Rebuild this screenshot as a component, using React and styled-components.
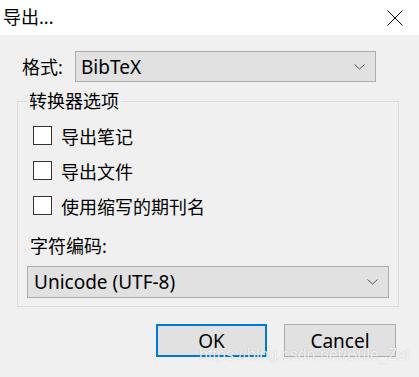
import React from "react";
import styled, { createGlobalStyle } from "styled-components";

const GlobalStyle = createGlobalStyle`
  html, body {
    margin: 0;
    padding: 0;
    background: #f0f0f0;
  }
  body {
    font-family: "Noto Sans", "Noto Sans CJK SC", sans-serif;
    color: #000;
  }
`;

const Dialog = styled.div`
  position: relative;
  width: 419px;
  height: 377px;
  background: #f0f0f0;
  overflow: hidden;
`;

const TitleBar = styled.div`
  height: 35px;
  background: #ffffff;
  display: flex;
  align-items: center;
  justify-content: space-between;
  padding: 0 16px 0 3px;
  box-sizing: border-box;
`;

const Title = styled.div`
  font-size: 18px;
  line-height: 18px;
  margin-top: -1px;
`;

const Body = styled.div`
  display: flex;
  flex-direction: column;
  padding: 16px 20px 0 17px;
`;

const FormatRow = styled.div`
  display: flex;
  align-items: center;
  height: 31px;
  padding-left: 5px;
`;

const Label = styled.div`
  font-size: 18px;
  line-height: 20px;
  width: 53px;
`;

const Select = styled.div`
  box-sizing: border-box;
  display: flex;
  align-items: center;
  justify-content: space-between;
  width: ${(p) => p.$width}px;
  height: ${(p) => p.$height}px;
  background: #e1e1e1;
  border: 1px solid #adadad;
  padding: 0 10px 0 ${(p) => p.$pad}px;
  font-size: 19px;
`;

const Group = styled.fieldset`
  box-sizing: border-box;
  width: 382px;
  height: 215px;
  margin: 10px 0 0 0;
  padding: 0 9px;
  border: 1px solid #dcdcdc;
`;

const Legend = styled.legend`
  font-size: 18px;
  line-height: 18px;
  padding: 0 2px;
`;

const Checks = styled.div`
  display: flex;
  flex-direction: column;
  gap: 16px;
  padding: 16px 0 0 6px;
`;

const CheckRow = styled.label`
  display: flex;
  align-items: center;
  gap: 9px;
  font-size: 18px;
  height: 19px;
`;

const Box = styled.span`
  box-sizing: border-box;
  width: 19px;
  height: 19px;
  background: #ffffff;
  border: 1px solid #333333;
`;

const EncodingLabel = styled.div`
  font-size: 18px;
  line-height: 20px;
  margin: 21px 0 0 3px;
`;

const EncodingSelect = styled(Select)`
  margin-top: 10px;
`;

const Buttons = styled.div`
  display: flex;
  justify-content: flex-end;
  gap: 17px;
  margin-top: 17px;
  padding-right: 3px;
`;

const Button = styled.div`
  box-sizing: border-box;
  width: ${(p) => p.$width}px;
  height: 33px;
  display: flex;
  align-items: center;
  justify-content: center;
  background: #e1e1e1;
  border: ${(p) => (p.$primary ? "2px solid #0078d7" : "1px solid #adadad")};
  font-size: 19px;
`;

const Watermark = styled.div`
  position: absolute;
  left: 199px;
  top: 346px;
  font-family: "Liberation Sans", Arial, sans-serif;
  font-size: 16px;
  line-height: 18px;
  color: rgba(255, 255, 255, 0.85);
  text-shadow: 0 0 1px rgba(0, 0, 0, 0.25);
  white-space: nowrap;
`;

const Chevron = () => (
  <svg width="11" height="6" viewBox="0 0 11 6">
    <path d="M0.5 0.5 L5.5 5 L10.5 0.5" fill="none" stroke="#555" strokeWidth="1" />
  </svg>
);

const CloseIcon = () => (
  <svg width="16" height="16" viewBox="0 0 16 16">
    <path d="M0.5 0.5 L15.5 15.5 M15.5 0.5 L0.5 15.5" stroke="#000" strokeWidth="1" />
  </svg>
);

const options = ["导出笔记", "导出文件", "使用缩写的期刊名"];

export default function App() {
  return (
    <>
      <GlobalStyle />
      <Dialog>
        <TitleBar>
          <Title>导出...</Title>
          <CloseIcon />
        </TitleBar>
        <Body>
          <FormatRow>
            <Label>格式:</Label>
            <Select $width={301} $height={31} $pad={5}>
              <span>BibTeX</span>
              <Chevron />
            </Select>
          </FormatRow>
          <Group>
            <Legend>转换器选项</Legend>
            <Checks>
              {options.map((o) => (
                <CheckRow key={o}>
                  <Box />
                  {o}
                </CheckRow>
              ))}
            </Checks>
            <EncodingLabel>字符编码:</EncodingLabel>
            <EncodingSelect $width={362} $height={32} $pad={6}>
              <span>Unicode (UTF-8)</span>
              <Chevron />
            </EncodingSelect>
          </Group>
          <Buttons>
            <Button $primary $width={111}>OK</Button>
            <Button $width={112}>Cancel</Button>
          </Buttons>
        </Body>
        <Watermark>https://blog.csdn.net/Bule_Zst</Watermark>
      </Dialog>
    </>
  );
}
